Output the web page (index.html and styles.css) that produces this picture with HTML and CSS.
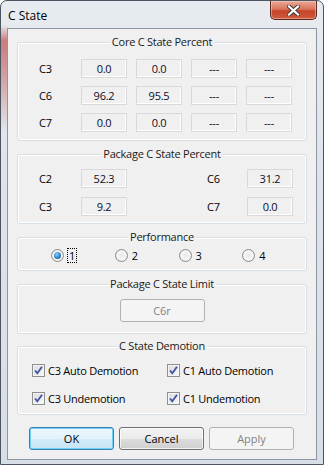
FILE: index.html
```html
<!DOCTYPE html>
<html lang="en">
<head>
    <meta charset="UTF-8">
    <meta name="viewport" content="width=device-width, initial-scale=1.0">
    <title>C State</title>
    <link rel="stylesheet" href="styles.css">
</head>
<body>
    <div class="window">
        <div class="titlebar">
            <span class="caption">C State</span>
            <div class="close">
                <svg width="13" height="11" viewBox="0 0 13 11">
                    <path d="M2 1.5 L11 9.5 M11 1.5 L2 9.5" stroke="#4a3a3a" stroke-width="4.2" stroke-linecap="square" fill="none"/>
                    <path d="M2 1.5 L11 9.5 M11 1.5 L2 9.5" stroke="#fff" stroke-width="2.2" stroke-linecap="square" fill="none"/>
                </svg>
            </div>
        </div>

        <div class="client">
            <div class="group core">
                <div class="group-title">Core C State Percent</div>
                <div class="core-grid">
                    <span class="lbl">C3</span>
                    <span class="val">0.0</span>
                    <span class="val">0.0</span>
                    <span class="val">---</span>
                    <span class="val">---</span>

                    <span class="lbl">C6</span>
                    <span class="val">96.2</span>
                    <span class="val">95.5</span>
                    <span class="val">---</span>
                    <span class="val">---</span>

                    <span class="lbl">C7</span>
                    <span class="val">0.0</span>
                    <span class="val">0.0</span>
                    <span class="val">---</span>
                    <span class="val">---</span>
                </div>
            </div>

            <div class="group package">
                <div class="group-title">Package C State Percent</div>
                <div class="pkg-grid">
                    <span class="lbl">C2</span>
                    <span class="val">52.3</span>
                    <span class="lbl">C6</span>
                    <span class="val">31.2</span>

                    <span class="lbl">C3</span>
                    <span class="val">9.2</span>
                    <span class="lbl">C7</span>
                    <span class="val">0.0</span>
                </div>
            </div>

            <div class="group perf">
                <div class="group-title">Performance</div>
                <div class="radios">
                    <label class="radio-item"><span class="radio on"></span><span class="focus">1</span></label>
                    <label class="radio-item"><span class="radio"></span><span>2</span></label>
                    <label class="radio-item"><span class="radio"></span><span>3</span></label>
                    <label class="radio-item"><span class="radio"></span><span>4</span></label>
                </div>
            </div>

            <div class="group limit">
                <div class="group-title">Package C State Limit</div>
                <button class="btn disabled limit-btn" type="button">C6r</button>
            </div>

            <div class="group demotion">
                <div class="group-title">C State Demotion</div>
                <div class="checks">
                    <label class="check-item"><span class="box"><svg width="11" height="11" viewBox="0 0 11 11"><path d="M2 5.5 L4.3 8.2 L9 1.8" stroke="#4455a8" stroke-width="1.9" fill="none"/></svg></span>C3 Auto Demotion</label>
                    <label class="check-item"><span class="box"><svg width="11" height="11" viewBox="0 0 11 11"><path d="M2 5.5 L4.3 8.2 L9 1.8" stroke="#4455a8" stroke-width="1.9" fill="none"/></svg></span>C1 Auto Demotion</label>
                    <label class="check-item"><span class="box"><svg width="11" height="11" viewBox="0 0 11 11"><path d="M2 5.5 L4.3 8.2 L9 1.8" stroke="#4455a8" stroke-width="1.9" fill="none"/></svg></span>C3 Undemotion</label>
                    <label class="check-item"><span class="box"><svg width="11" height="11" viewBox="0 0 11 11"><path d="M2 5.5 L4.3 8.2 L9 1.8" stroke="#4455a8" stroke-width="1.9" fill="none"/></svg></span>C1 Undemotion</label>
                </div>
            </div>

            <div class="actions">
                <button class="btn default" type="button">OK</button>
                <button class="btn" type="button">Cancel</button>
                <button class="btn disabled" type="button">Apply</button>
            </div>
        </div>
    </div>
</body>
</html>
```

FILE: styles.css
```css
* {
    box-sizing: border-box;
}

body {
    margin: 0;
    background: #fff;
    font-family: "Open Sans", "Noto Sans", sans-serif;
    font-size: 11px;
    letter-spacing: -0.25px;
    color: #000;
}

.window {
    width: 324px;
    height: 465px;
    border: 1px solid #4c5560;
    border-radius: 7px 7px 0 0;
    padding: 0 6px 4px;
    background:
        linear-gradient(to bottom, rgba(200,120,120,0) 24px, rgba(196,104,104,0.85) 40px, rgba(200,120,120,0.6) 80px, rgba(200,120,120,0) 130px) left top / 7px 100% no-repeat,
        linear-gradient(to bottom, #e8ecf0, #dde3e9 40%, #d8dee5);
    display: flex;
    flex-direction: column;
}

.titlebar {
    height: 27px;
    display: flex;
    justify-content: space-between;
    align-items: flex-start;
}

.caption {
    font-size: 12px;
    letter-spacing: 0;
    line-height: 16px;
    margin: 7px 0 0 1px;
    color: #000;
}

.close {
    width: 47px;
    height: 19px;
    border: 1px solid #5c2a22;
    border-top: none;
    border-radius: 0 0 5px 5px;
    background: linear-gradient(to bottom, #e9a99a 0%, #d9745c 45%, #c5442a 55%, #cf5a3b 100%);
    box-shadow: inset 0 0 0 1px rgba(255,220,210,0.45);
    display: flex;
    align-items: center;
    justify-content: center;
}

.client {
    border: 1px solid #8b96a2;
    background: #f0f0f0;
    padding: 13px 9px 9px;
}

.group {
    border: 1px solid #d5dfe5;
    border-radius: 3px;
    box-shadow: inset 0 0 0 1px #fff;
    margin-bottom: 13px;
}

.group-title {
    width: max-content;
    margin: -9px auto 0;
    padding: 0 2px;
    line-height: 16px;
    background: #f0f0f0;
    color: #1a1a1a;
}

.lbl {
    line-height: 19px;
}

.val {
    height: 19px;
    border: 1px solid #d9d9d9;
    box-shadow: inset -1px -1px #fff;
    text-align: center;
    line-height: 17px;
    color: #0d0d2a;
}

.core-grid {
    display: grid;
    grid-template-columns: 33px repeat(4, 46px);
    column-gap: 9px;
    row-gap: 8px;
    margin: 9px 0 0 21px;
    padding-bottom: 8px;
}

.pkg-grid {
    display: grid;
    grid-template-columns: 42px 126px 40px 46px;
    row-gap: 9px;
    margin: 7px 0 0 21px;
    padding-bottom: 7px;
}

.pkg-grid .val {
    width: 46px;
}

.radios {
    display: flex;
    margin: 4px 0 0 33px;
    padding-bottom: 8px;
}

.radio-item {
    width: 66px;
    height: 13px;
    display: flex;
    align-items: center;
}

.radio {
    width: 13px;
    height: 13px;
    border-radius: 50%;
    border: 1px solid #8c8c8c;
    background: radial-gradient(circle at 50% 50%, #e6e6e6 0, #f6f6f6 55%, #d0d0d0 100%);
    margin-right: 4px;
    position: relative;
}

.radio.on::after {
    content: "";
    position: absolute;
    left: 2px;
    top: 2px;
    width: 7px;
    height: 7px;
    border-radius: 50%;
    background: radial-gradient(circle at 40% 35%, #8fd3f6 0, #2a83c9 55%, #16467e 100%);
}

.focus {
    outline: 1px dotted #000;
    padding: 0 1px;
    line-height: 13px;
}

.limit {
    margin-bottom: 12px;
}

.limit-btn {
    display: block;
    margin: 7px auto 11px;
}

.demotion {
    margin-bottom: 12px;
}

.checks {
    display: grid;
    grid-template-columns: 135px 135px;
    row-gap: 15px;
    margin: 10px 0 0 14px;
    padding-bottom: 9px;
}

.check-item {
    height: 13px;
    display: flex;
    align-items: center;
    gap: 3px;
}

.box {
    width: 13px;
    height: 13px;
    border: 1px solid #8e8f8f;
    background: linear-gradient(135deg, #dcdcdc, #f8f8f8);
    box-shadow: inset 0 0 0 1px #f4f4f4;
    display: flex;
}

.actions {
    display: flex;
    gap: 5px;
    margin-left: 12px;
}

.btn {
    width: 85px;
    height: 23px;
    padding: 0;
    font: inherit;
    color: #000;
    border: 1px solid #707070;
    border-radius: 3px;
    background: linear-gradient(to bottom, #f2f2f2 0%, #ebebeb 50%, #dddddd 50%, #cfcfcf 100%);
    box-shadow: inset 0 0 0 1px rgba(255,255,255,0.7);
}

.btn.default {
    border-color: #3c7fb1;
    background: linear-gradient(to bottom, #eef7fd 0%, #e2f2fb 50%, #d2ebf9 50%, #c6e5f7 100%);
    box-shadow: inset 0 0 0 1px #6fd0f8;
}

.btn.disabled {
    color: #838383;
    border-color: #adb2b5;
    background: #f4f4f4;
    box-shadow: none;
}
```
